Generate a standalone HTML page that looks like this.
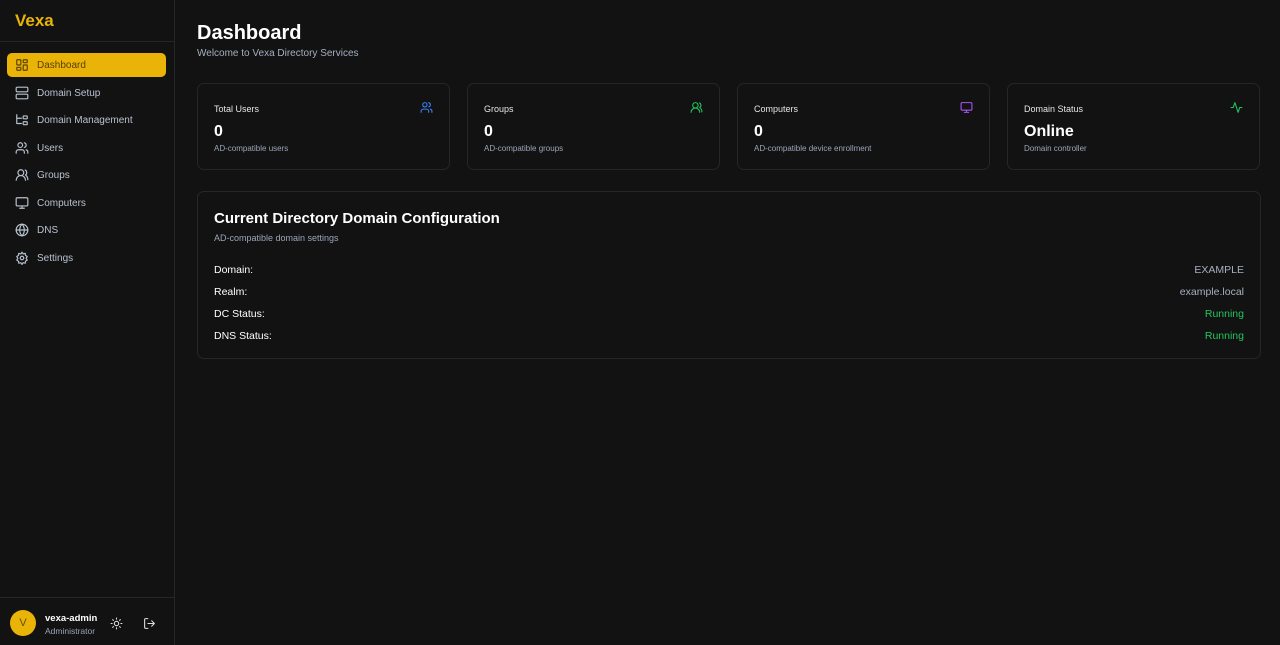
<!DOCTYPE html>
<html><head><style>
*{box-sizing:border-box;margin:0;padding:0}
body{width:1280px;height:645px;background:#121212;font-family:"Liberation Sans",sans-serif;color:#fff;position:relative;overflow:hidden}
.sb{position:absolute;left:0;top:0;width:175px;height:645px;background:#121212;border-right:1px solid #262626}
.logo{position:absolute;left:15px;top:11px;font-size:17px;font-weight:bold;color:#eab308}
.hr{position:absolute;left:0;width:174px;height:1px;background:#262626}
.nav{position:absolute;left:7px;width:159px;height:24px;border-radius:5px;font-size:10px;color:#b8c2d0}
.nav svg{position:absolute;left:8px;top:5px;width:14px;height:14px;fill:none;stroke:currentColor;stroke-width:2;stroke-linecap:round;stroke-linejoin:round}
.nav span{position:absolute;left:30px;top:7px}
.act{background:#eab308;color:#5a4100}
.card{position:absolute;border:1px solid #262626;border-radius:7px;background:#121212}
.st{top:83px;height:87px;width:253px}
.st .t{position:absolute;left:16px;top:20px;font-size:9px;color:#e5e5e5}
.st .v{position:absolute;left:16px;top:39px;font-size:16px;font-weight:bold}
.st .s{position:absolute;left:16px;top:60px;font-size:8px;color:#9aa6b8}
.st svg{position:absolute;right:16px;top:17px;width:13px;height:13px;fill:none;stroke-width:2;stroke-linecap:round;stroke-linejoin:round}
.row{position:absolute;left:16px;right:16px;font-size:10.5px;display:flex;justify-content:space-between}
</style></head><body>
<div class="sb">
<div class="logo">Vexa</div>
<div class="hr" style="top:41px"></div>
<div class="nav act" style="top:53px"><svg viewBox="0 0 24 24"><rect x="3" y="3" width="7" height="9" rx="1"/><rect x="14" y="3" width="7" height="5" rx="1"/><rect x="14" y="12" width="7" height="9" rx="1"/><rect x="3" y="16" width="7" height="5" rx="1"/></svg><span>Dashboard</span></div>
<div class="nav" style="top:81px"><svg viewBox="0 0 24 24"><rect x="2" y="2" width="20" height="8" rx="2"/><rect x="2" y="14" width="20" height="8" rx="2"/></svg><span>Domain Setup</span></div>
<div class="nav" style="top:108px"><svg viewBox="0 0 24 24"><path d="M3 3v15h8M3 9h8"/><rect x="14" y="5" width="7" height="5" rx="1"/><rect x="14" y="15" width="7" height="5" rx="1"/></svg><span>Domain Management</span></div>
<div class="nav" style="top:136px"><svg viewBox="0 0 24 24"><path d="M16 21v-2a4 4 0 0 0-4-4H6a4 4 0 0 0-4 4v2"/><circle cx="9" cy="7" r="4"/><path d="M22 21v-2a4 4 0 0 0-3-3.9M16 3.1a4 4 0 0 1 0 7.8"/></svg><span>Users</span></div>
<div class="nav" style="top:163px"><svg viewBox="0 0 24 24"><path d="M18 21a8 8 0 0 0-16 0"/><circle cx="10" cy="8" r="5"/><path d="M22 20c0-3.4-2-6.5-4-8a5 5 0 0 0-.5-8.5"/></svg><span>Groups</span></div>
<div class="nav" style="top:191px"><svg viewBox="0 0 24 24"><rect x="2" y="3" width="20" height="14" rx="2"/><path d="M8 21h8M12 17v4"/></svg><span>Computers</span></div>
<div class="nav" style="top:218px"><svg viewBox="0 0 24 24"><circle cx="12" cy="12" r="10"/><path d="M12 2a14.5 14.5 0 0 0 0 20 14.5 14.5 0 0 0 0-20M2 12h20"/></svg><span>DNS</span></div>
<div class="nav" style="top:246px"><svg viewBox="0 0 24 24"><circle cx="12" cy="12" r="3"/><path d="M12 2l2 3 3.5-1 .5 3.5 3 2-2 3 2 3-3 2-.5 3.5-3.5-1-2 3-2-3-3.5 1-.5-3.5-3-2 2-3-2-3 3-2 .5-3.5 3.5 1z"/></svg><span>Settings</span></div>
<div class="hr" style="top:597px"></div>
<div style="position:absolute;left:10px;top:610px;width:26px;height:26px;border-radius:50%;background:#eab308;color:#6b4d00;font-size:11px;text-align:center;line-height:26px">V</div>
<div style="position:absolute;left:45px;top:613px;font-size:9.5px;font-weight:bold">vexa-admin</div>
<div style="position:absolute;left:45px;top:626px;font-size:8.5px;color:#9aa6b8">Administrator</div>
<svg style="position:absolute;left:110px;top:617px" width="13" height="13" viewBox="0 0 24 24" fill="none" stroke="#ddd" stroke-width="2" stroke-linecap="round"><circle cx="12" cy="12" r="4"/><path d="M12 2v2M12 20v2M4.9 4.9l1.4 1.4M17.7 17.7l1.4 1.4M2 12h2M20 12h2M4.9 19.1l1.4-1.4M17.7 6.3l1.4-1.4"/></svg>
<svg style="position:absolute;left:143px;top:617px" width="13" height="13" viewBox="0 0 24 24" fill="none" stroke="#ddd" stroke-width="2" stroke-linecap="round" stroke-linejoin="round"><path d="M9 21H5a2 2 0 0 1-2-2V5a2 2 0 0 1 2-2h4M16 17l5-5-5-5M21 12H9"/></svg>
</div>

<div style="position:absolute;left:197px;top:22px;font-size:20px;font-weight:bold">Dashboard</div>
<div style="position:absolute;left:197px;top:48px;font-size:10px;color:#a5b0c0">Welcome to Vexa Directory Services</div>

<div class="card st" style="left:197px"><div class="t">Total Users</div><svg viewBox="0 0 24 24" stroke="#3b82f6"><path d="M16 21v-2a4 4 0 0 0-4-4H6a4 4 0 0 0-4 4v2"/><circle cx="9" cy="7" r="4"/><path d="M22 21v-2a4 4 0 0 0-3-3.9M16 3.1a4 4 0 0 1 0 7.8"/></svg><div class="v">0</div><div class="s">AD-compatible users</div></div>
<div class="card st" style="left:467px"><div class="t">Groups</div><svg viewBox="0 0 24 24" stroke="#22c55e"><path d="M18 21a8 8 0 0 0-16 0"/><circle cx="10" cy="8" r="5"/><path d="M22 20c0-3.4-2-6.5-4-8a5 5 0 0 0-.5-8.5"/></svg><div class="v">0</div><div class="s">AD-compatible groups</div></div>
<div class="card st" style="left:737px"><div class="t">Computers</div><svg viewBox="0 0 24 24" stroke="#a855f7"><rect x="2" y="3" width="20" height="14" rx="2"/><path d="M8 21h8M12 17v4"/></svg><div class="v">0</div><div class="s">AD-compatible device enrollment</div></div>
<div class="card st" style="left:1007px"><div class="t">Domain Status</div><svg viewBox="0 0 24 24" stroke="#22c55e"><path d="M22 12h-4l-3 9L9 3l-3 9H2"/></svg><div class="v">Online</div><div class="s">Domain controller</div></div>

<div class="card" style="left:197px;top:191px;width:1064px;height:168px">
<div style="position:absolute;left:16px;top:18px;font-size:15px;font-weight:bold">Current Directory Domain Configuration</div>
<div style="position:absolute;left:16px;top:41px;font-size:9px;color:#9aa6b8">AD-compatible domain settings</div>
<div class="row" style="top:72px"><span>Domain:</span><span style="color:#a5b0c0">EXAMPLE</span></div>
<div class="row" style="top:94px"><span>Realm:</span><span style="color:#a5b0c0">example.local</span></div>
<div class="row" style="top:116px"><span>DC Status:</span><span style="color:#22c55e">Running</span></div>
<div class="row" style="top:138px"><span>DNS Status:</span><span style="color:#22c55e">Running</span></div>
</div>
</body></html>
